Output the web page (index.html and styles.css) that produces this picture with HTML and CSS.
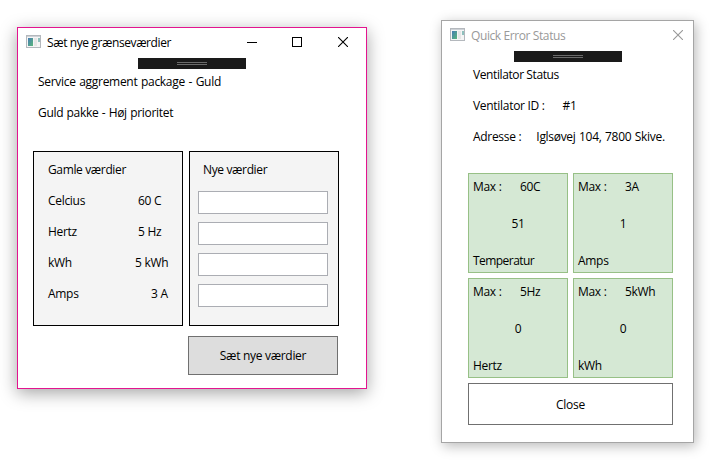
FILE: index.html
```html
<!DOCTYPE html>
<html lang="da">
<head>
<meta charset="utf-8">
<title>Grænseværdier</title>
<link rel="stylesheet" href="styles.css">
</head>
<body>
<svg class="defs" width="0" height="0">
  <defs>
    <linearGradient id="pane" x1="0" y1="0" x2="1" y2="1"><stop offset="0" stop-color="#467cb4"/><stop offset="1" stop-color="#5ab77a"/></linearGradient>
    <symbol id="app" viewBox="0 0 15 13">
      <rect x=".5" y=".5" width="14" height="12" fill="#f5f5f5" stroke="#b4b8bd"/>
      <path d="M1 1.5h13" stroke="#cdd1d6"/>
      <rect x="2" y="3" width="5" height="8" fill="url(#pane)"/>
      <rect x="8" y="3" width="3" height="8" fill="#e6e6e6"/>
      <rect x="12" y="3" width="2" height="4" fill="#8fc0bd"/>
    </symbol>
    <symbol id="close" viewBox="0 0 10 10"><path d="M0 0L10 10M10 0L0 10" stroke="currentColor" stroke-width="1.1"/></symbol>
  </defs>
</svg>
<main class="desktop">
  <section class="window limits">
    <header class="titlebar">
      <svg class="app-icon"><use href="#app"/></svg>
      <h1>Sæt nye grænseværdier</h1>
      <div class="controls">
        <svg class="minimize" width="10" height="10"><path d="M0 5.5h10" stroke="#000"/></svg>
        <svg width="10" height="10"><rect x=".5" y=".5" width="9" height="9" fill="none" stroke="#000"/></svg>
        <svg width="10" height="10"><use href="#close"/></svg>
      </div>
    </header>
    <div class="handle"><i></i></div>
    <div class="info">
      <p class="package">Service aggrement package - Guld</p>
      <p class="priority">Guld pakke - Høj prioritet</p>
    </div>
    <div class="panels">
      <div class="panel old">
        <h2>Gamle værdier</h2>
        <div class="row"><span>Celcius</span><span>60 C</span></div>
        <div class="row"><span>Hertz</span><span>5 Hz</span></div>
        <div class="row power"><span>kWh</span><span>5 kWh</span></div>
        <div class="row amps"><span>Amps</span><span>3 A</span></div>
      </div>
      <div class="panel new">
        <h2>Nye værdier</h2>
        <input aria-label="Celcius"><input aria-label="Hertz"><input aria-label="kWh"><input aria-label="Amps">
      </div>
    </div>
    <button class="submit"><span>Sæt nye værdier</span></button>
  </section>

  <section class="window status">
    <header class="titlebar">
      <svg class="app-icon"><use href="#app"/></svg>
      <h1>Quick Error Status</h1>
      <div class="controls"><svg width="10" height="10"><use href="#close"/></svg></div>
    </header>
    <div class="handle"><i></i></div>
    <div class="info">
      <p class="heading">Ventilator Status</p>
      <p class="vent-id"><span>Ventilator ID :</span><span>#1</span></p>
      <p class="address"><span>Adresse :</span><span>Iglsøvej 104, 7800 Skive.</span></p>
    </div>
    <div class="cards">
      <div class="card"><div class="max"><span>Max :</span><span>60C</span></div><b>51</b><span class="temp">Temperatur</span></div>
      <div class="card"><div class="max"><span>Max :</span><span>3A</span></div><b>1</b><span>Amps</span></div>
      <div class="card"><div class="max"><span>Max :</span><span>5Hz</span></div><b>0</b><span>Hertz</span></div>
      <div class="card"><div class="max"><span>Max :</span><span>5kWh</span></div><b>0</b><span>kWh</span></div>
    </div>
    <button class="dismiss"><span>Close</span></button>
  </section>
</main>
</body>
</html>
```
FILE: styles.css
```css
* { box-sizing: border-box; }
body { margin: 0; background: #fff; color: #000; font: 12px/31px "Open Sans", "Noto Sans", sans-serif; letter-spacing: -.3px; }
h1, h2, p { margin: 0; font-size: 12px; font-weight: 400; }
h1, .heading { letter-spacing: -.4px; }
h2 { letter-spacing: -.36px; }
svg { display: block; }
.defs { position: absolute; }
.desktop { display: flex; align-items: flex-start; gap: 74px; width: 718px; height: 461px; padding: 20px 0 0 17px; overflow: hidden; }
.window { flex: none; display: flex; flex-direction: column; background: #fff; border: 1px solid; }
.limits { width: 350px; height: 362px; margin-top: 7px; border-color: #e3148f; box-shadow: 0 4px 16px rgba(0,0,0,.36); }
.status { width: 253px; height: 423px; border-color: #a5a5a5; box-shadow: 2px 3px 12px rgba(0,0,0,.28); }
.titlebar { display: flex; align-items: center; height: 30px; padding: 0 18px 0 8px; }
.status .titlebar { color: #999; padding-right: 10px; }
.app-icon { width: 15px; height: 13px; margin-top: -3px; }
.titlebar h1 { margin-left: 6px; line-height: 30px; }
.controls { display: flex; gap: 36px; margin-left: auto; margin-top: -2px; }
.minimize { margin-right: -1px; }
.handle { display: flex; align-items: center; justify-content: center; width: 108px; height: 11px; background: #1a1a1a; }
.limits .handle { margin-left: 120px; }
.status .handle { margin-left: 72px; }
.handle i { width: 30px; height: 3px; border: solid #6b6b6b; border-width: 1px 0; }
.limits .info { padding: 0 20px; margin-top: -3px; }
.info p { height: 31px; white-space: nowrap; }
.package { word-spacing: .8px; }
.priority { word-spacing: .5px; }
.panels { display: flex; gap: 6px; margin: 23px 0 0 15px; }
.panel { width: 150px; height: 175px; background: #f4f4f4; border: 1px solid #000; padding-top: 2px; }
.old { padding-left: 14px; }
.new { padding-left: 8px; }
.new h2 { height: 37px; padding-left: 5px; }
.row { display: flex; }
.row span:first-child { width: 90px; }
.power span:first-child { width: 87px; }
.amps span:first-child { width: 103px; }
input { display: block; width: 130px; height: 23px; margin: 0 0 8px; padding: 0; border: 1px solid #abadb3; border-radius: 0; background: #fff; }
button { font: inherit; letter-spacing: inherit; color: #000; padding: 0; border: 1px solid #707070; border-radius: 0; }
.submit { width: 150px; height: 39px; margin: 10px 0 0 170px; background: #ddd; }
.status .info { padding-left: 31px; margin-top: -3px; }
.vent-id span + span { margin-left: 18px; }
.address span + span { margin-left: 15px; word-spacing: .7px; }
.cards { display: grid; grid-template-columns: 100px 100px; gap: 5px; margin: 21px 0 0 26px; }
.card { height: 100px; padding: 4px 4px 2px; background: #d5e8d4; border: 1px solid #97c086; line-height: 18px; display: flex; flex-direction: column; justify-content: space-between; }
.max { display: flex; }
.max span:first-child { width: 47px; }
.card b { font-weight: 400; text-align: center; }
.temp { letter-spacing: -.55px; }
.dismiss { width: 205px; height: 42px; margin: 5px 0 0 26px; background: #fff; }
```
